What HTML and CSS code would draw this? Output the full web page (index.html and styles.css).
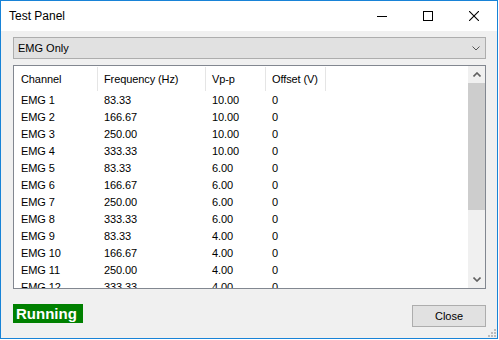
FILE: index.html
```html
<!DOCTYPE html>
<html lang="en">
<head>
  <meta charset="UTF-8">
  <title>Test Panel</title>
  <link rel="stylesheet" href="styles.css">
</head>
<body>
  <div class="window">
    <!-- Title bar -->
    <div class="titlebar">
      <span class="title">Test Panel</span>
      <span class="cap-btn">
        <svg width="10" height="10"><line x1="0" y1="5.5" x2="10" y2="5.5" stroke="#000"/></svg>
      </span>
      <span class="cap-btn">
        <svg width="10" height="10"><rect x="0.5" y="0.5" width="9" height="9" fill="none" stroke="#000"/></svg>
      </span>
      <span class="cap-btn">
        <svg width="10" height="10"><path d="M0 0L10 10M10 0L0 10" stroke="#000" stroke-width="1.1"/></svg>
      </span>
    </div>

    <div class="client">
      <div class="combo">
        <span>EMG Only</span>
        <svg width="8" height="5"><polyline points="0.5,0.5 4,4 7.5,0.5" fill="none" stroke="#555"/></svg>
      </div>

      <div class="list">
        <div class="list-view">
          <div class="row header">
            <span>Channel</span>
            <span>Frequency (Hz)</span>
            <span>Vp-p</span>
            <span>Offset (V)</span>
          </div>
          <div class="row"><span>EMG 1</span><span>83.33</span><span>10.00</span><span>0</span></div>
          <div class="row"><span>EMG 2</span><span>166.67</span><span>10.00</span><span>0</span></div>
          <div class="row"><span>EMG 3</span><span>250.00</span><span>10.00</span><span>0</span></div>
          <div class="row"><span>EMG 4</span><span>333.33</span><span>10.00</span><span>0</span></div>
          <div class="row"><span>EMG 5</span><span>83.33</span><span>6.00</span><span>0</span></div>
          <div class="row"><span>EMG 6</span><span>166.67</span><span>6.00</span><span>0</span></div>
          <div class="row"><span>EMG 7</span><span>250.00</span><span>6.00</span><span>0</span></div>
          <div class="row"><span>EMG 8</span><span>333.33</span><span>6.00</span><span>0</span></div>
          <div class="row"><span>EMG 9</span><span>83.33</span><span>4.00</span><span>0</span></div>
          <div class="row"><span>EMG 10</span><span>166.67</span><span>4.00</span><span>0</span></div>
          <div class="row"><span>EMG 11</span><span>250.00</span><span>4.00</span><span>0</span></div>
          <div class="row"><span>EMG 12</span><span>333.33</span><span>4.00</span><span>0</span></div>
        </div>
        <div class="vscroll">
          <div class="sb-arrow">
            <svg width="8" height="5"><polyline points="0.5,4.5 4,1 7.5,4.5" fill="none" stroke="#606060" stroke-width="1.6"/></svg>
          </div>
          <div class="sb-track"><div class="sb-thumb"></div></div>
          <div class="sb-arrow">
            <svg width="8" height="5"><polyline points="0.5,0.5 4,4 7.5,0.5" fill="none" stroke="#606060" stroke-width="1.6"/></svg>
          </div>
        </div>
      </div>

      <div class="footer">
        <span class="status">Running</span>
        <button class="close-btn">Close</button>
      </div>

      <!-- size grip -->
      <svg class="grip" width="8" height="8">
        <rect x="6" y="0" width="2" height="2"/>
        <rect x="3" y="3" width="2" height="2"/>
        <rect x="6" y="3" width="2" height="2"/>
        <rect x="0" y="6" width="2" height="2"/>
        <rect x="3" y="6" width="2" height="2"/>
        <rect x="6" y="6" width="2" height="2"/>
      </svg>
    </div>
  </div>
</body>
</html>
```

FILE: styles.css
```css
body {
  margin: 0;
  font-family: "Liberation Sans", Arial, sans-serif;
  font-size: 11px;
  color: #000;
  background: #fff;
}
.window {
  width: 498px;
  height: 339px;
  box-sizing: border-box;
  border: 1px solid #1883d7;
  display: flex;
  flex-direction: column;
  background: #f0f0f0;
}
.titlebar {
  height: 30px;
  background: #fff;
  display: flex;
  align-items: center;
}
.title {
  flex: 1;
  padding-left: 8px;
  font-size: 12px;
}
.cap-btn {
  width: 46px;
  height: 30px;
  display: flex;
  align-items: center;
  justify-content: center;
}
.client {
  flex: 1;
  position: relative;
  padding: 6px 11px 0 12px;
  display: flex;
  flex-direction: column;
}
.combo {
  height: 22px;
  box-sizing: border-box;
  border: 1px solid #adadad;
  background: #e1e1e1;
  display: flex;
  align-items: center;
  justify-content: space-between;
  padding: 0 5px 0 4px;
}
.list {
  margin-top: 6px;
  height: 224px;
  box-sizing: border-box;
  border: 1px solid #828790;
  background: #fff;
  display: flex;
  overflow: hidden;
}
.list-view {
  flex: 1;
  overflow: hidden;
}
.row {
  display: grid;
  grid-template-columns: 84px 108px 60px 60px;
  height: 17px;
  line-height: 17px;
  white-space: nowrap;
  letter-spacing: -0.1px;
}
.row span {
  padding-left: 6px;
}
.row span:first-child {
  padding-left: 7px;
}
.row.header {
  height: 26px;
  line-height: 25px;
}
.row.header span {
  box-sizing: border-box;
  height: 24px;
  margin-top: 1px;
  border-right: 1px solid #e5e5e5;
}
.vscroll {
  width: 17px;
  background: #f0f0f0;
  display: flex;
  flex-direction: column;
}
.sb-arrow {
  height: 17px;
  display: flex;
  align-items: center;
  justify-content: center;
}
.sb-track {
  flex: 1;
}
.sb-thumb {
  height: 127px;
  background: #cdcdcd;
}
.footer {
  display: flex;
  justify-content: space-between;
  align-items: flex-start;
}
.status {
  margin-top: 15px;
  width: 70px;
  height: 19px;
  box-sizing: border-box;
  padding-left: 3px;
  background: #008000;
  color: #fff;
  font-weight: bold;
  font-size: 15px;
  line-height: 19px;
}
.close-btn {
  margin-top: 16px;
  width: 74px;
  height: 22px;
  padding: 0;
  border: 1px solid #adadad;
  background: #e1e1e1;
  font-family: "Liberation Sans", Arial, sans-serif;
  font-size: 11px;
  color: #000;
}
.grip {
  position: absolute;
  right: 1px;
  bottom: 1px;
  fill: #bcbcbc;
}
```
